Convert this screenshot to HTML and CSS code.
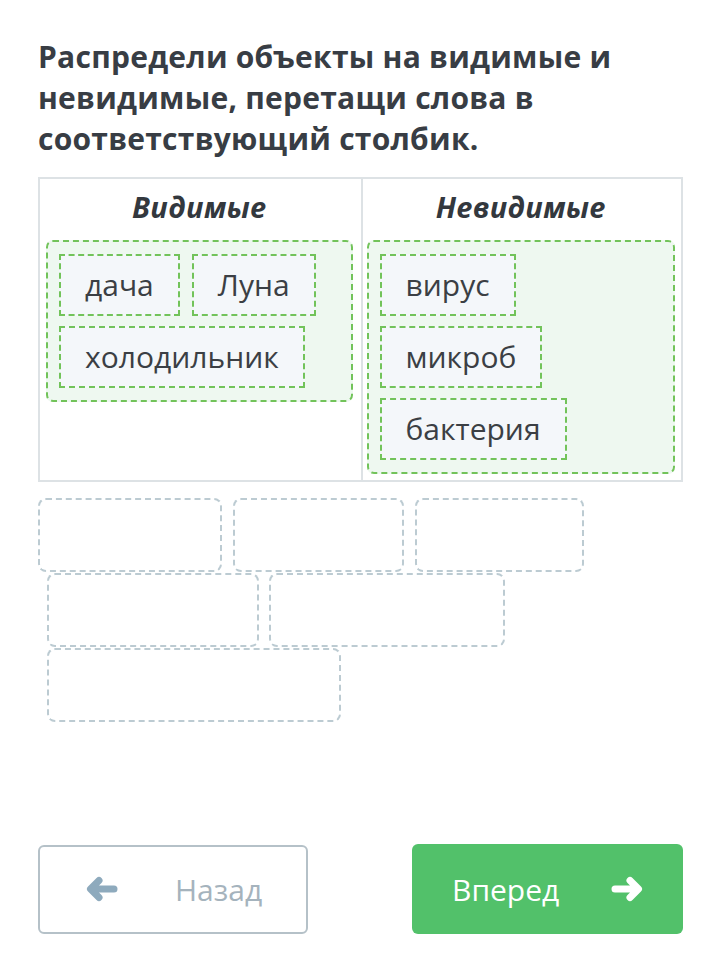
FILE: index.html
```html
<!DOCTYPE html>
<html lang="ru">

<head>
    <meta charset="UTF-8">
    <meta name="viewport" content="width=device-width, initial-scale=1.0">
    <title>Видимые и невидимые</title>
    <link rel="stylesheet" href="styles.css">
</head>

<body>
    <div class="page">
        <h1 class="question">Распредели объекты на видимые и невидимые, перетащи слова в соответствующий столбик.</h1>

        <div class="board">
            <div class="column">
                <div class="column-title">Видимые</div>
                <div class="dropzone">
                    <span class="chip">дача</span>
                    <span class="chip">Луна</span>
                    <span class="chip">холодильник</span>
                </div>
            </div>
            <div class="column">
                <div class="column-title">Невидимые</div>
                <div class="dropzone">
                    <span class="chip">вирус</span>
                    <span class="chip">микроб</span>
                    <span class="chip">бактерия</span>
                </div>
            </div>
        </div>

        <div class="slots">
            <div class="slot-row">
                <div class="slot slot-a"></div>
                <div class="slot slot-b"></div>
                <div class="slot slot-c"></div>
            </div>
            <div class="slot-row indent">
                <div class="slot slot-d"></div>
                <div class="slot slot-e"></div>
            </div>
            <div class="slot-row indent">
                <div class="slot slot-f"></div>
            </div>
        </div>

        <div class="nav">
            <button class="btn btn-back">
                <svg class="arrow" viewBox="0 0 32 26" width="32" height="26">
                    <path d="M28 13H5M13 4.5L4.5 13L13 21.5" />
                </svg>
                <span>Назад</span>
            </button>
            <button class="btn btn-next">
                <span>Вперед</span>
                <svg class="arrow" viewBox="0 0 32 26" width="32" height="26">
                    <path d="M4 13H27M19 4.5L27.5 13L19 21.5" />
                </svg>
            </button>
        </div>
    </div>
</body>

</html>
```

FILE: styles.css
```css
* {
    box-sizing: border-box;
    margin: 0;
    padding: 0;
}

body {
    font-family: 'Open Sans', 'Noto Sans', sans-serif;
    background-color: #fff;
    color: #3a3f45;
}

.page {
    padding: 36px 37px 0 38px;
}

.question {
    font-size: 30px;
    line-height: 41px;
    font-weight: 700;
    color: #383d44;
    letter-spacing: 0.25px;
}

.board {
    display: grid;
    grid-template-columns: 1fr 1fr;
    align-items: stretch;
    margin-top: 18px;
    border: 2px solid #dde2e5;
}

.column {
    display: flex;
    flex-direction: column;
    align-items: stretch;
    padding: 0 6px 6px;
}

.column + .column {
    border-left: 2px solid #dde2e5;
    padding-left: 4px;
}

.column:first-child {
    padding-right: 8px;
}

.column-title {
    height: 55px;
    line-height: 55px;
    text-align: center;
    font-size: 29px;
    font-weight: 700;
    font-style: italic;
    color: #33383e;
    letter-spacing: 0.3px;
}

.dropzone {
    display: flex;
    flex-wrap: wrap;
    align-content: flex-start;
    gap: 10px 12px;
    margin-top: 6px;
    padding: 12px 11px 12px;
    background-color: #eef8f0;
    border: 2px dashed #72c35a;
    border-radius: 7px;
}

.column:last-child .dropzone {
    flex: 1;
}

.chip {
    display: inline-block;
    height: 62px;
    line-height: 58px;
    padding: 0 24px;
    font-size: 30px;
    color: #3b3f44;
    background-color: #f4f7fa;
    border: 2px dashed #72c35a;
}

.slots {
    margin-top: 16px;
}

.slot-row {
    display: flex;
    gap: 11px;
}

.slot-row.indent {
    padding-left: 9px;
    gap: 10px;
    margin-top: 1px;
}

.slot {
    height: 74px;
    border: 2px dashed #bccbd2;
    border-radius: 8px;
}

.slot-a { width: 184px; }
.slot-b { width: 171px; }
.slot-c { width: 169px; }
.slot-d { width: 212px; }
.slot-e { width: 236px; }
.slot-f { width: 294px; }

.nav {
    display: flex;
    justify-content: space-between;
    align-items: center;
    margin-top: 122px;
}

.btn {
    display: flex;
    align-items: center;
    height: 90px;
    width: 271px;
    font-family: 'Open Sans', 'Noto Sans', sans-serif;
    font-size: 30px;
    border-radius: 6px;
    cursor: pointer;
}

.btn .arrow path {
    fill: none;
    stroke: currentColor;
    stroke-width: 7;
    stroke-linecap: round;
    stroke-linejoin: round;
}

.btn-back {
    width: 270px;
    height: 89px;
    padding-left: 46px;
    gap: 57px;
    background-color: #fff;
    border: 2px solid #b5c1c8;
    color: #a5b3bd;
}

.btn-back .arrow {
    color: #8eaabd;
}

.btn-next {
    justify-content: space-between;
    padding: 0 40px;
    background-color: #52c16a;
    border: none;
    color: #fff;
}
```
